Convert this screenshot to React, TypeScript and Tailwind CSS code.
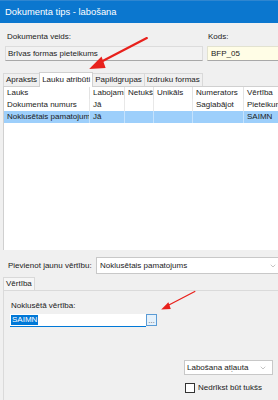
import { ChevronDown } from "lucide-react"

const cols = [
  { w: "w-[86px]", h: "Lauks" },
  { w: "w-[35px]", h: "Labojams" },
  { w: "w-[29px]", h: "Netukšs" },
  { w: "w-[39px]", h: "Unikāls" },
  { w: "w-[51px]", h: "Numerators" },
  { w: "w-[60px]", h: "Vērtība" },
]

const rows = [
  ["Dokumenta numurs", "Jā", "", "", "Saglabājot", "Pieteikums"],
  ["Noklusētais pamatojums", "Jā", "", "", "", "SAIMN"],
]

function Arrow({ className }: { className: string }) {
  // sarkanā bulta, uzzīmēta no labās augšas uz kreiso apakšu
  return (
    <svg className={className} viewBox="0 0 60 34" fill="none">
      <line x1="58" y1="2" x2="10" y2="27" stroke="#e8211c" strokeWidth="2.2" strokeLinecap="round" />
      <polygon points="2,32 14,20 18,31" fill="#e8211c" />
    </svg>
  )
}

export default function App() {
  return (
    <div className="relative w-[278px] h-[400px] overflow-hidden bg-[#f0f0f0] text-[8px] leading-none text-[#1a1a1a] font-['Liberation_Sans',Arial,sans-serif]">
      <div className="h-[23px] bg-[#0b77cf] border-t border-[#2f86d0] flex items-center pl-[5px] text-white text-[9.4px]">
        Dokumenta tips - labošana
      </div>

      <div className="flex gap-[4px] pl-[5px] pt-[9px]">
        <div className="w-[198px] shrink-0">
          <div className="h-[10px] pl-[2px] flex items-center">Dokumenta veids:</div>
          <div className="mt-[4px] h-[15px] bg-[#f2f2f2] border border-[#dcdcdc] border-b-[#a8a8a8] flex items-center pl-[2px]">
            Brīvas formas pieteikums
          </div>
        </div>
        <div className="w-[90px] shrink-0">
          <div className="h-[10px] pl-[1px] flex items-center">Kods:</div>
          <div className="mt-[4px] h-[15px] bg-[#fffde6] border border-[#e2e2d0] border-b-[#a8a8a8] flex items-center pl-[3px]">
            BFP_05
          </div>
        </div>
      </div>

      <div className="mt-[10px] pl-[3px] flex items-end h-[15px]">
        <div className="h-[13px] px-[2px] flex items-center border-t border-l border-[#d9d9d9]">Apraksts</div>
        <div className="h-[15px] px-[2px] flex items-center bg-white border border-b-0 border-[#d0d0d0] mb-[-1px] relative z-10">Lauku atribūti</div>
        <div className="h-[13px] px-[2px] flex items-center border-t border-r border-[#d9d9d9]">Papildgrupas</div>
        <div className="h-[13px] px-[2px] flex items-center border-t border-r border-[#d9d9d9]">Izdruku formas</div>
      </div>

      <div className="ml-[3px] h-[164px] bg-white border-t border-l border-[#d0d0d0]">
        <div className="flex h-[12px] items-center">
          {cols.map((c, i) => (
            <div key={i} className={`${c.w} shrink-0 h-full flex items-center pl-[3px] border-r border-[#e3e3e3] overflow-hidden whitespace-nowrap`}>
              {c.h}
            </div>
          ))}
        </div>
        {rows.map((r, ri) => (
          <div key={ri} className={`flex h-[12px] ${ri === 1 ? "bg-[#9dcffb]" : ""}`}>
            {r.map((v, i) => (
              <div key={i} className={`${cols[i].w} shrink-0 h-full flex items-center pl-[3px] border-r ${ri === 1 ? "border-[#c4e2fd]" : "border-[#e8e8e8]"} overflow-hidden whitespace-nowrap`}>
                {v}
              </div>
            ))}
          </div>
        ))}
      </div>

      <div className="flex items-center h-[19px] mt-[6px] pl-[8px]">
        <div className="w-[88px] shrink-0">Pievienot jaunu vērtību:</div>
        <div className="w-[190px] shrink-0 h-[17px] bg-white border border-[#c8c8c8] flex items-center pl-[3px] justify-between pr-[8px]">
          <span>Noklusētais pamatojums</span>
          <ChevronDown size={8} strokeWidth={1.5} className="text-[#8a8a8a]" />
        </div>
      </div>

      <div className="mt-[2px] pl-[3px] flex">
        <div className="h-[13px] px-[2px] flex items-center border-t border-l border-r border-[#d9d9d9] bg-[#f6f6f6]">Vērtība</div>
      </div>
      <div className="ml-[3px] h-[120px] border-t border-l border-[#dadada] bg-[#f0f0f0] pl-[6px]">
        <div className="mt-[10px] h-[9px] pl-[1px] flex items-center">Noklusētā vērtība:</div>
        <div className="mt-[4px] w-[147px] h-[13px] flex">
          <div className="flex-1 bg-white border-b border-[#0078d7] flex items-center pl-[1px]">
            <span className="bg-[#0078d7] text-white px-[1px] leading-[10px]">SAIMN</span>
          </div>
          <div className="w-[11px] h-[12px] border border-[#5a9bd5] bg-[#e5f1fb] flex items-end justify-center text-[7px] leading-[8px] text-[#333]">…</div>
        </div>

        <div className="mt-[33px] ml-[174px] w-[89px] h-[15px] bg-white border border-[#c8c8c8] flex items-center justify-between pl-[2px] pr-[5px]">
          <span>Labošana atļauta</span>
          <ChevronDown size={8} strokeWidth={1.5} className="text-[#8a8a8a]" />
        </div>
        <div className="mt-[8px] ml-[175px] flex items-center gap-[3px]">
          <div className="w-[10px] h-[10px] bg-white border border-[#333]" />
          <span>Nedrīkst būt tukšs</span>
        </div>
      </div>

      <Arrow className="absolute left-[87px] top-[36px] w-[62px] h-[35px]" />
      <Arrow className="absolute left-[160px] top-[288px] w-[36px] h-[25px]" />
    </div>
  )
}
